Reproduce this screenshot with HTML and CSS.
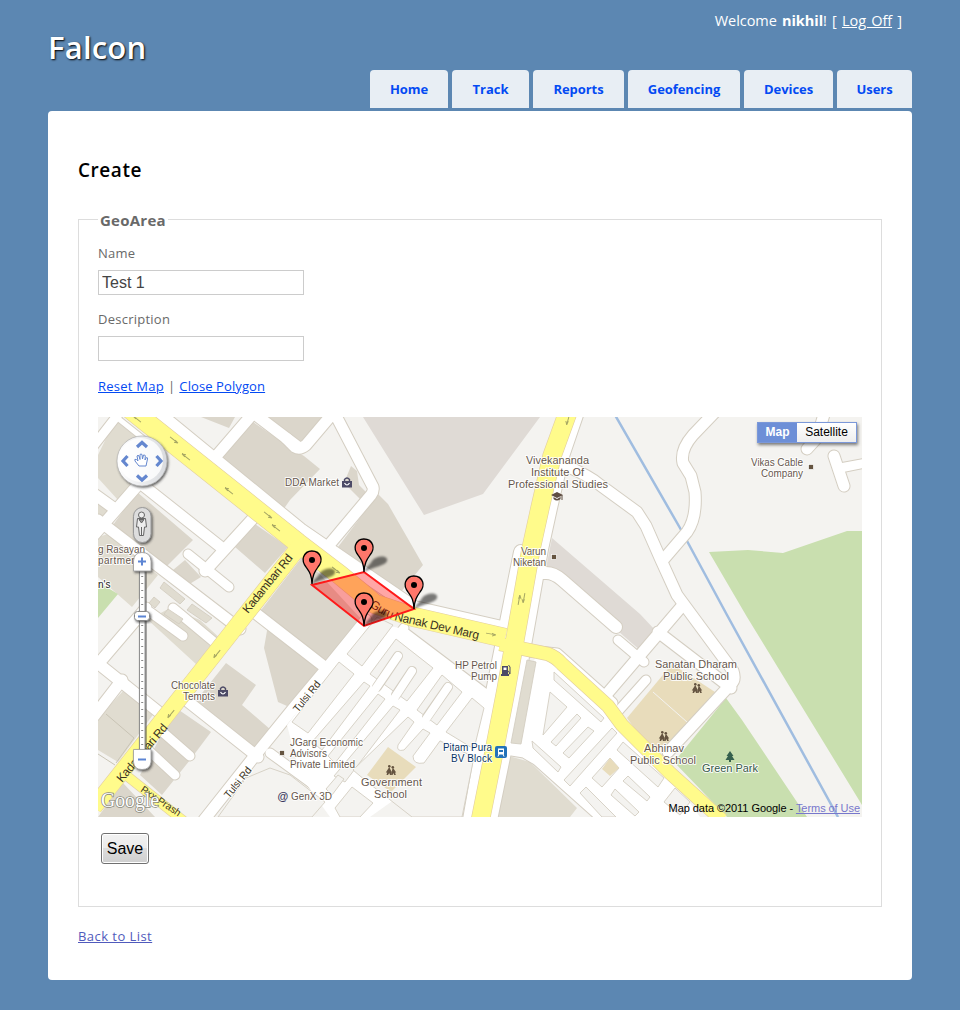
FILE: index.html
```html
<!DOCTYPE html>
<html lang="en">
<head>
<meta charset="utf-8">
<title>Create</title>
<link rel="stylesheet" href="styles.css">
</head>
<body>
<div class="page">
  <header class="header">
    <h1 class="brand">Falcon</h1>
    <div class="login">Welcome <b>nikhil</b>! [ <a href="#">Log Off</a> ]</div>
    <ul class="menu">
      <li class="tab-home"><a href="#">Home</a></li>
      <li class="tab-track"><a href="#">Track</a></li>
      <li class="tab-reports"><a href="#">Reports</a></li>
      <li class="tab-geo"><a href="#">Geofencing</a></li>
      <li class="tab-devices"><a href="#">Devices</a></li>
      <li class="tab-users"><a href="#">Users</a></li>
    </ul>
  </header>
  <main class="main">
    <h2 class="title">Create</h2>
    <fieldset class="panel">
      <legend>GeoArea</legend>
      <label class="label" for="name">Name</label>
      <input class="field" id="name" type="text" value="Test 1">
      <label class="label" for="desc">Description</label>
      <input class="field" id="desc" type="text">
      <div class="actions"><a class="reset" href="#">Reset Map</a><span>|</span><a class="close" href="#">Close Polygon</a></div>
      <div class="map">
        <svg class="canvas" viewBox="98 417 764 400" width="764" height="400">
          <defs>
            <linearGradient id="metal" x1="0" x2="1"><stop offset="0" stop-color="#fff"/><stop offset="1" stop-color="#d8dade"/></linearGradient>
            <filter id="soft" x="-40%" y="-40%" width="180%" height="180%"><feGaussianBlur stdDeviation="1.3"/></filter>
            <filter id="drop" x="-20%" y="-20%" width="150%" height="150%"><feDropShadow dx="1.2" dy="1.5" stdDeviation="1" flood-color="#333" flood-opacity=".75"/></filter>
            <g id="pin">
              <path d="M0 0C-.5-10-2.500-12-6-17C-9-21-9.500-24-8.500-27C-7-31-3.500-33-.2-33C4-33 7.500-30.500 8.700-27C9.600-24 8.500-20 6-17C2.500-12 .6-9 0 0Z" fill="#ff776b" stroke="#000" stroke-width="1.3"/>
              <circle cy="-24" r="3" fill="#000"/>
            </g>
            <path id="pinshade" d="M0 0C3-6 6-7 8-11C12-17 25-17 23-11C21-6 11-6 0 0Z" fill="#000" opacity=".5" filter="url(#soft)"/>
            <g id="flow"><path d="M-5 0H5M-5 0L-1.500-1.800M-5 0L-1 .6" fill="none" stroke="#a6a663" stroke-width="1"/></g>
            <g id="bag"><path d="M-5-2H5V4.500H-5Z" fill="#4c4a66"/><path d="M-2.500-2V-3.500Q0-6.500 2.500-3.500V-2" fill="none" stroke="#4c4a66" stroke-width="1.400"/><path d="M-2.500 0Q0 4 2.500 0" fill="none" stroke="#fff" stroke-width="1.200"/></g>
            <g id="kids" fill="#655440"><circle cx="-1.700" cy="-3.700" r="1.300"/><circle cx="1.800" cy="-2.800" r="1.300"/><path d="M-1.700-3L.5 1.800L.2 5H-1L-1.800 3L-3 5H-4.500L-3.800 2.500H-5.200ZM1.800-2.500L5.200 2.500H4L4.800 5H3.200L2.300 3L1.600 5H.3L.8 1Z"/></g>
            <g id="streets" class="street">
              <path class="w9" d="M92 448L120 412"/><path class="w6" d="M110 412L150 444"/>
              <path class="w11" d="M145 480L137 486L94 535M94 494L115 509"/>
              <path class="w11" d="M140 483L222 548M258 513L205 571M98 520L240 629"/>
              <path class="w9" d="M188 554L229 587"/>
              <path class="w11" d="M256 410L212 461M252 412L298 447"/>
              <path class="w11" d="M286 438L295 447Q300 450 306 445L334 412L373 487Q374 491 371 495L324 551"/>
              <path class="w14" d="M146 404L300 530L370 578L414 608L510 630"/>
              <path class="w11" d="M254 612L326 668"/>
              <path class="w11" d="M366 620L327 668L296 705L257 753L204 820"/>
              <path class="w11" d="M146 608L100 662M90 657L165 717"/>
              <path class="w9" d="M150 612L183 636M173 608L220 647"/>
              <path class="w11" d="M186 700L258 757M122 680L94 716"/>
              <path class="w9" d="M158 728L190 756M146 748L175 775M270 753L355 815"/>
              <path class="w14" d="M577 412L562 456L550 508L541 549L529 617L516 690L504 752L490 820"/>
              <path class="w14" d="M521 552L509 612L489 712L470 820"/>
              <path class="w11" d="M566 466Q590 476 600 485L637 512L646 526L661 560L677 595L733 671Q736 680 731 684L668 752"/>
              <path class="w11" d="M663 560L687 532Q697 518 695 492L691 476L683 463Q680 450 693 435L716 411"/>
              <path class="w12" d="M536 573H546Q554 573 562 580L616 627"/>
              <path class="w11" d="M682 606L600 702M658 632L731 688"/>
              <path class="w9" d="M618 640L644 662M646 680L612 718"/>
              <path class="w11" d="M825 411L817 438L807 449M834 456L844 486"/><path class="w9" d="M840 468L866 463"/>
              <path class="w9" d="M404 632L490 697M404 628L365 680"/>
              <path class="w9" d="M505 750L524 753L536 760L600 817"/>
              <path class="w11" d="M520 650L557 654L612 703"/>
            </g>
          </defs>
          <rect x="98" y="417" width="764" height="400" fill="#f4f3f0"/>
          <path class="built" d="M220 459L250 420L297 452L304 456L320 469L290 500L283 510ZM261 417H322L299 447L290 440ZM201 417H235L229 428ZM137 492L193 540L165 568L113 525ZM173 570L185 560L201 577L188 585ZM255 524L288 547L265 573L235 547ZM303 556L362 620L326 662L290 637L258 614ZM268 625L290 642L318 670L287 706L278 702L264 648ZM226 663L256 685L242 705L271 730L258 750L195 702ZM176 708L211 732L190 760L162 795L140 775ZM123 783L155 817H98ZM378 494L388 504L423 565L400 593L335 551ZM351 466L357 471L359 485L366 492L362 501L344 483Z"/>
          <path class="pale" d="M98 455L115 420L135 436L168 463L137 488L118 500L98 478ZM98 537L108 534L158 575L132 607L98 577ZM98 503L110 510L98 523ZM148 620L170 608L200 620L222 640L197 665ZM124 690L155 712L118 762L98 750V718ZM505 755L530 762L577 808L570 817H496Z"/>
          <path class="grey" d="M363 417L424 515L483 494L540 417ZM552 538L640 614L655 630L642 652L546 568Z"/>
          <path class="green" d="M98 582L118 594L98 618ZM709 552L748 550L783 553L847 531H862V805L747 617ZM726 698L742 720L807 817H727L674 762Z"/>
          <path class="sand" d="M627 718L672 664L715 692L670 742L650 750Z"/>
          <path d="M653 692L687 722" stroke="#f4f3f0"/>
          <path d="M615 415L680 528L727 615L838 817" fill="none" stroke="#a0bde0" stroke-width="2.500"/>
          <path d="M106 714L134 738M98 754L115 765M134 738L116 763" fill="none" stroke="#c9c4b5"/>
          <use href="#streets" class="casing"/>
          <g fill="#fff">
            <path d="M366 622L400 628L488 695L478 757L440 740L405 792L370 817H330L300 775L287 725Z"/>
            <path d="M536 650L558 656L612 706L625 728L672 778L700 817H600L532 757L505 753L508 740L521 744Z"/>
          </g>
          <use href="#streets" class="surface"/>
          <g class="block">
            <path d="M377 617L393 625L362 666L347 654ZM339 662L354 674L308 733L292 722ZM396 639L433 668L407 701L370 674ZM442 675L462 692L437 725L417 710ZM472 698L484 708L474 749L446 732Z"/>
            <path d="M364 682L370 686L322 750L312 742ZM378 694L385 699L335 763L328 756ZM393 706L400 710L345 782L334 776Z"/>
            <path d="M408 717L414 722L398 745Q396 752 404 750L423 729L430 733L413 756Q413 765 424 763L440 741L474 757L462 817H412L366 781L353 770Z"/>
            <path d="M352 787L373 803L360 817H340L335 808ZM338 775L344 779L332 795L326 789Z"/>
            <path d="M270 768L290 775L325 802L312 817H218L246 778Z"/>
            <path d="M550 692L567 707L543 735ZM554 672V680L601 722L604 718ZM577 714L581 718L556 746L551 742ZM588 727L594 731L569 758L563 753ZM612 728L617 733L570 786L564 780ZM532 741L561 767L558 772L533 748ZM610 758L619 768L602 787L592 778ZM586 787L580 793L602 817H616ZM615 789L639 812L635 816L611 795ZM628 776L650 797L647 801L623 781ZM623 742L664 778L658 787L617 750ZM675 788L690 802L680 815L664 802Z"/>
            <path class="pale" d="M527 660L536 662L521 744L511 743ZM164 582L185 599L180 604L160 588ZM154 597L160 602L155 608L149 603ZM192 604L212 618L206 623L187 610ZM168 609L183 619L179 624L164 614Z"/>
          </g>
          <g class="loops"><path d="M398 656L377 687M412 671L396 695M448 687L427 717"/></g>
          <g class="loops inner"><path d="M398 656L374 691M412 671L393 700M448 687L424 722"/></g>
          <path class="sand" d="M388 747L416 767L391 792L367 775ZM610 758L619 768L610 776L602 769Z"/>
          <g class="highway edge"><path class="h20" d="M120 401L298 543L340 575L375 604L414 617L505 638"/><path class="h17" d="M302 543L246 614L94 807"/><path class="h9" d="M122 772L190 826"/><path class="h19" d="M568 412L552 456L540 508L531 549L519 617L506 690L494 752L480 822"/><path class="h13" d="M500 644L548 654Q556 657 562 664L608 706L622 725L670 773L722 820"/></g>
          <g class="highway"><path class="h20" d="M120 401L298 543L340 575L375 604L414 617L505 638"/><path class="h17" d="M302 543L246 614L94 807"/><path class="h9" d="M122 772L190 826"/><path class="h19" d="M568 412L552 456L540 508L531 549L519 617L506 690L494 752L480 822"/><path class="h13" d="M500 644L548 654Q556 657 562 664L608 706L622 725L670 773L722 820"/></g>
          <use href="#flow" transform="translate(137 419) rotate(38)"/><use href="#flow" transform="translate(174 440) rotate(218)"/><use href="#flow" transform="translate(186 457) rotate(38)"/><use href="#flow" transform="translate(229 491) rotate(38)"/><use href="#flow" transform="translate(268 515) rotate(218)"/><use href="#flow" transform="translate(276 528) rotate(38)"/><use href="#flow" transform="translate(336 570) rotate(218)"/><use href="#flow" transform="translate(217 654) rotate(-50)"/><use href="#flow" transform="translate(171 714) rotate(-50)"/><use href="#flow" transform="translate(491 634) rotate(190)"/><use href="#flow" transform="translate(519 600) rotate(100)"/><use href="#flow" transform="translate(524 598) rotate(-80)"/><use href="#flow" transform="translate(568 420) rotate(-75)"/>
          <g class="road-name">
            <text transform="translate(248 614) rotate(-51)" textLength="72">Kadambari Rd</text>
            <text transform="translate(122 783) rotate(-50)" textLength="72">Kadambari Rd</text>
            <text transform="translate(298 713) rotate(-51)" textLength="37" class="small">Tulsi Rd</text>
            <text transform="translate(229 799) rotate(-51)" textLength="37" class="small">Tulsi Rd</text>
            <text transform="translate(140 791) rotate(34)" textLength="46" class="minor">Pxx-Prash</text>
            <path id="marg" d="M369 606Q384 617 398 621L490 642" fill="none" stroke="none"/>
            <text><textPath href="#marg" textLength="115">Guru Nanak Dev Marg</textPath></text>
          </g>
          <g class="place">
            <text x="285" y="486" textLength="54">DDA Market</text>
            <text x="98" y="553" textLength="47">g Rasayan</text><text x="98" y="564" textLength="42">partment</text>
            <text x="98" y="588" class="dark">n's</text>
            <text x="521" y="555" textLength="25">Varun</text><text x="513" y="566" textLength="33">Niketan</text>
            <text x="751" y="466" textLength="52">Vikas Cable</text><text x="761" y="477" textLength="42">Company</text>
            <text x="171" y="689" textLength="44">Chocolate</text><text x="183" y="700" textLength="32">Tempts</text>
            <text x="290" y="746" textLength="73">JGarg Economic</text><text x="290" y="757" textLength="37">Advisors</text><text x="290" y="768" textLength="65">Private Limited</text>
            <text x="291" y="800" textLength="41">GenX 3D</text>
            <text x="455" y="669" textLength="42">HP Petrol</text><text x="471" y="680" textLength="26">Pump</text>
          </g>
          <g class="place station"><text x="443" y="751" textLength="49">Pitam Pura</text><text x="451" y="762" textLength="41">BV Block</text></g>
          <g class="place big">
            <text x="526" y="464" textLength="63">Vivekananda</text><text x="531" y="476" textLength="53">Institute Of</text><text x="508" y="488" textLength="100">Professional Studies</text>
            <text x="361" y="786" textLength="61">Government</text><text x="374" y="798" textLength="33">School</text>
            <text x="655" y="668" textLength="82">Sanatan Dharam</text><text x="663" y="680" textLength="66">Public School</text>
            <text x="644" y="752" textLength="40">Abhinav</text><text x="630" y="764" textLength="66">Public School</text>
            <text x="702" y="772" textLength="56" class="park">Green Park</text>
          </g>
          <use href="#bag" x="347" y="483"/><use href="#bag" x="223" y="692"/>
          <use href="#kids" x="391" y="770"/><use href="#kids" x="697" y="688"/><use href="#kids" x="664" y="736"/>
          <g fill="#655440" stroke="#fff" stroke-width=".7"><rect x="551.500" y="554.500" width="5" height="5"/><rect x="808.500" y="464.500" width="5" height="5"/><rect x="279.500" y="750.500" width="5" height="5"/></g>
          <g fill="#5f4e43"><path d="M551 495L557 492L563 495L557 498ZM553.500 497L557 499L560.500 497V499Q557 502 553.500 499Z"/><path d="M562 495V500" stroke="#5f4e43"/></g>
          <text class="at" x="277.500" y="799.500">@</text>
          <g><path d="M502 666H508V674H509V676H501V674H502Z" fill="#4c4a66"/><path d="M503.500 667.500H506.500V670H503.500Z" fill="#fff"/><path d="M508 671Q509.500 671 509.500 674H510V667L508.500 665" fill="none" stroke="#4c4a66"/></g>
          <rect x="495" y="746" width="12" height="12" rx="2" fill="#2372b9"/><path d="M498 748.500H504V754.500H498Z" fill="#fff"/><path d="M499 754L498 756.500M503 754L504 756.500" stroke="#fff"/><path d="M499 750H503V752H499Z" fill="#2372b9"/>
          <path d="M730 751L733.500 756H732L734.500 760H731V762H729V760H725.500L728 756H726.500Z" fill="#35604d"/>

          <path d="M312 585L364 572L414 609L364 626Z" fill="#f00" fill-opacity=".35" stroke="#ff1a1a" stroke-width="2"/>
          <use href="#pinshade" x="312" y="584"/><use href="#pinshade" x="364" y="572"/><use href="#pinshade" x="414" y="609"/><use href="#pinshade" x="364" y="626"/>
          <use href="#pin" x="364" y="572"/><use href="#pin" x="312" y="584"/><use href="#pin" x="414" y="609"/><use href="#pin" x="364" y="626"/>

          <text class="logo" x="101" y="807" textLength="58" lengthAdjust="spacingAndGlyphs">Google</text>

          <circle cx="142" cy="461" r="25" fill="url(#metal)" stroke="#aaa" stroke-width=".6" filter="url(#drop)"/>
          <circle cx="141" cy="460" r="22" fill="#fff" opacity=".8"/>
          <path d="M137 447L142 442.500L147 447M137 475.500L142 480L147 475.500M127.500 456L123 461L127.500 466M156.500 456L161 461L156.500 466" fill="none" stroke="#6487cf" stroke-width="3.200"/>
          <path d="M139 466L135 461Q134 458.500 136.500 459.500L138 461L137 456Q138 454.500 139 456L140 459.500L140 454.500Q141 453.500 142 454.500L142.500 459L143.500 455Q145 454.500 145.300 456L145 460L146.500 457.500Q148 457.500 147.500 459L146 466Z" fill="#fff" stroke="#6487cf" stroke-width="1"/>
          <rect x="133.500" y="507.500" width="17.500" height="35" rx="8.700" fill="#ddd" stroke="#999" filter="url(#drop)"/>
          <g fill="#eee" stroke="#666" stroke-width="1"><path d="M137.500 518.500H145.500L146.500 527H144.500L143.500 535.500H139.500L138.500 527H136.500Z"/><circle cx="141.500" cy="515" r="3"/><path d="M141.500 527V535M139 519.500L141.500 523L144 519.500Z" fill="#999"/></g>
          <rect x="139.500" y="570" width="5.500" height="182" fill="#fff" stroke="#888" stroke-width=".9" filter="url(#drop)"/>
          <path d="M142.200 576V748" stroke="#888" stroke-width="2" stroke-dasharray="1 6"/>
          <path d="M133.500 571V561Q134 552.500 142 552.500Q150.500 552.500 151 561V571Z" fill="#fff" stroke="#999" stroke-width=".8" filter="url(#drop)"/>
          <path d="M133.500 749.500H151V762Q150 769.500 142 769.500Q134 769.500 133.500 762Z" fill="#fff" stroke="#999" stroke-width=".8" filter="url(#drop)"/>
          <rect x="134.500" y="611.500" width="15" height="9" rx="3" fill="#fff" stroke="#888" filter="url(#drop)"/>
          <path d="M138 561.500H146M142 557.500V565.500M138 759.500H146M138 616.500H146" stroke="#5d85d4" stroke-width="2"/>
        </svg>
        <div class="types"><b>Map</b><span>Satellite</span></div>
        <div class="credit">Map data ©2011 Google - <a href="#">Terms of Use</a></div>
      </div>
      <button class="save" type="button">Save</button>
    </fieldset>
    <a class="back" href="#">Back to List</a>
  </main>
</div>
</body>
</html>
```
FILE: styles.css
```css
* { box-sizing: border-box; }
body { margin: 0; background: #5c87b2; color: #696969; font: 13px/16px "Trebuchet MS", "Open Sans", sans-serif; letter-spacing: .25px; }
.page { width: 864px; margin: 0 auto; padding-bottom: 30px; }
.header { height: 111px; display: grid; grid-template: 70px 38px / 200px 1fr; color: #fff; }
.brand { margin: 27px 0 0; font-size: 31px; line-height: 40px; font-weight: 600; letter-spacing: .2px; text-shadow: 1px 1px 2px #000; }
.login { justify-self: end; margin: 11px 10px 0 0; font-size: 14.5px; line-height: 20px; white-space: pre; letter-spacing: -.05px; word-spacing: 1.5px; }
.login a { color: #fff; }
.menu { grid-column: 1 / 3; display: flex; justify-content: flex-end; gap: 4px; margin: 0; padding: 0; list-style: none; }
.menu li { height: 38px; border-radius: 4px 4px 0 0; background: #e8eef4; text-align: center; line-height: 38px; }
.menu a { color: #034af3; font-weight: 700; text-decoration: none; font-size: 13px; letter-spacing: -.05px; }
.tab-home { width: 78px; }
.tab-track { width: 77px; }
.tab-reports { width: 91px; }
.tab-geo { width: 112px; }
.tab-devices { width: 89px; }
.tab-users { width: 75px; }
.main { height: 869px; padding: 46px 30px 0; background: #fff; border-radius: 4px; }
.title { margin: 0; height: 53px; color: #000; font-size: 19px; line-height: 26px; font-weight: 600; letter-spacing: .55px; }
.panel { height: 697px; margin: 0; padding: 0 19px; border: 1px solid #ddd; min-width: 0; }
legend { height: 19px; padding: 0 2px; font-size: 15px; line-height: 20px; font-weight: 700; letter-spacing: .25px; }
.label { display: block; margin-top: 16px; }
.field { display: block; width: 206px; height: 25px; margin: 9px 0 0; padding: 0 3px; border: 1px solid #ccc; color: #444; font: 16px "Liberation Sans", Arial, sans-serif; }
.actions { display: flex; margin-top: 17px; gap: 4px; }
.actions a { color: #034af3; }
.actions .close { letter-spacing: .1px; }
.map { position: relative; width: 764px; height: 400px; margin-top: 23px; overflow: hidden; letter-spacing: 0; }
.canvas { display: block; font-family: "Liberation Sans", Arial, sans-serif; }
.built { fill: #dbd6cb; }
.pale { fill: #e0dcd0; }
.grey { fill: #dfdad5; }
.green { fill: #c9dfaf; }
.sand { fill: #e8dcbb; }
.casing { --tone: #d4cec2; --extra: 2px; }
.surface { --tone: #fff; --extra: 0px; }
.street path { fill: none; stroke: var(--tone); stroke-width: calc(var(--w) + var(--extra)); stroke-linecap: round; stroke-linejoin: round; }
.w6 { --w: 5px; }
.w9 { --w: 9px; }
.w11 { --w: 11px; }
.w12 { --w: 12px; }
.w14 { --w: 14px; }
.block { fill: #f4f3f0; stroke: #d4cec2; stroke-width: .9; }
.loops { fill: none; stroke: #d4cec2; stroke-width: 10; stroke-linecap: round; }
.loops.inner { stroke: #fff; stroke-width: 8; }
.highway { --extra: 0px; fill: none; stroke: #fffb8b; stroke-linejoin: round; }
.highway.edge { --extra: 1.2px; stroke: #e3cfa0; }
.highway path { stroke-width: calc(var(--w) + var(--extra)); }
.h9 { --w: 9px; }
.h13 { --w: 13px; }
.h17 { --w: 16px; }
.h19 { --w: 18px; }
.h20 { --w: 19px; }
.road-name { font-size: 12px; fill: #3b3322; }
.road-name .small { font-size: 10.5px; paint-order: stroke; stroke: #fff; stroke-width: 2px; }
.road-name .minor { font-size: 10px; }
.place { font-size: 10px; fill: #66574d; paint-order: stroke; stroke: #fff; stroke-opacity: .85; stroke-width: 2px; stroke-linejoin: round; }
.place.big { font-size: 11px; }
.place.station { fill: #0a3566; }
.dark { fill: #222; }
.park { fill: #36584a; }
.at { font-size: 11px; font-weight: 700; fill: #3b3960; }
.logo { font: 21px "Liberation Serif", "Times New Roman", serif; fill: #fff; stroke: #8c8c80; stroke-width: 1.6px; paint-order: stroke; }
.types { position: absolute; top: 5px; right: 5px; display: flex; width: 100px; height: 21px; border: 1px solid #7b98d9; background: linear-gradient(#fff, #eee); box-shadow: 1px 2px 3px rgba(0, 0, 0, .5); color: #000; font: 12px/19px "Liberation Sans", Arial, sans-serif; }
.types b { width: 39px; background: #6d8fd7; color: #fff; text-align: center; }
.types span { flex: 1; text-align: center; }
.credit { position: absolute; right: 2px; bottom: 1px; color: #000; font: 11px/15px "Liberation Sans", Arial, sans-serif; letter-spacing: -.06px; white-space: nowrap; }
.credit a { color: #7777cc; }
.save { display: block; width: 48px; height: 31px; margin: 16px 3px 0; padding: 0; border: 1px solid #707070; border-radius: 3px; background: linear-gradient(#f2f2f2, #ebebeb 50%, #ddd 50%, #cfcfcf); box-shadow: inset 0 0 0 1px #fff; color: #000; font: 16px "Liberation Sans", Arial, sans-serif; }
.back { display: inline-block; margin-top: 21px; color: #505abc; letter-spacing: .45px; }
```
